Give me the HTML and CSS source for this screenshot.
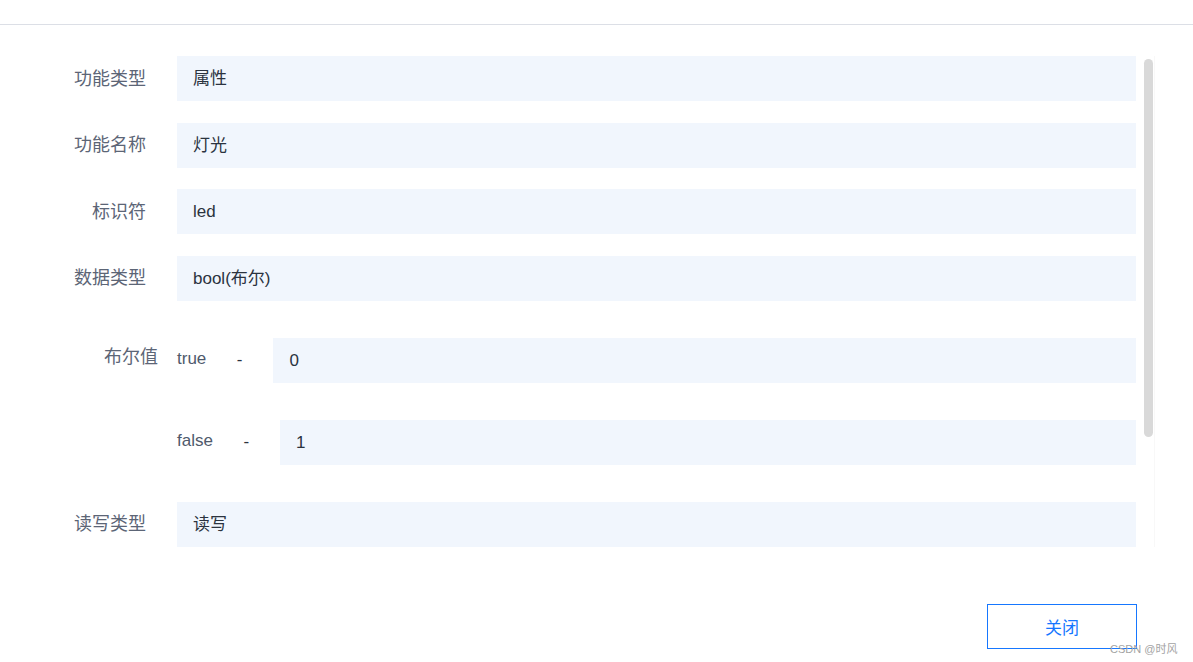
FILE: index.html
```html
<!DOCTYPE html>
<html lang="zh-CN">
<head>
  <meta charset="UTF-8" />
  <title>查看功能</title>
  <link rel="stylesheet" href="styles.css">
</head>
<body>
  <div class="dialog">
    <div class="dialog-header"></div>

    <div class="dialog-body">
      <div class="scroll-area">
        <div class="form-row">
          <div class="form-label">功能类型</div>
          <div class="form-value">属性</div>
        </div>
        <div class="form-row">
          <div class="form-label">功能名称</div>
          <div class="form-value">灯光</div>
        </div>
        <div class="form-row">
          <div class="form-label">标识符</div>
          <div class="form-value">led</div>
        </div>
        <div class="form-row">
          <div class="form-label">数据类型</div>
          <div class="form-value">bool(布尔)</div>
        </div>

        <div class="form-row bool-row">
          <div class="form-label bool-label">布尔值</div>
          <div class="bool-list">
            <div class="bool-item">
              <span class="bool-key">true</span>
              <span class="bool-dash">-</span>
              <div class="form-value">0</div>
            </div>
            <div class="bool-item">
              <span class="bool-key">false</span>
              <span class="bool-dash">-</span>
              <div class="form-value">1</div>
            </div>
          </div>
        </div>

        <div class="form-row">
          <div class="form-label">读写类型</div>
          <div class="form-value">读写</div>
        </div>

        <div class="scrollbar"></div>
      </div>
    </div>

    <div class="dialog-footer">
      <button class="btn-close">关闭</button>
    </div>
  </div>

  <div class="watermark">CSDN @时风</div>
</body>
</html>
```

FILE: styles.css
```css
html, body {
  margin: 0;
  padding: 0;
  height: 100%;
  background: #fff;
  font-family: 'Liberation Sans', 'Noto Sans CJK SC', sans-serif;
}

.dialog {
  position: relative;
  min-height: 100%;
}

.dialog-header {
  height: 24px;
  border-bottom: 1px solid #dcdfe6;
}

.dialog-body {
  padding-top: 31px;
}

.scroll-area {
  position: relative;
  margin-right: 38px;
  padding-right: 18px;
  border-right: 1px solid #f8f8f8;
}

.form-row {
  display: flex;
  align-items: center;
  margin-bottom: 21.67px;
}

.form-label {
  width: 177px;
  box-sizing: border-box;
  padding-right: 31px;
  padding-bottom: 4px;
  text-align: right;
  font-size: 18px;
  color: #5c6576;
  flex-shrink: 0;
}

.form-value {
  flex: 1;
  height: 45px;
  line-height: 45px;
  padding-left: 16px;
  background: #f1f6fd;
  font-size: 17px;
  color: #2b333f;
}

.bool-row {
  align-items: flex-start;
  margin-top: 37px;
  margin-bottom: 37px;
}

.bool-label {
  padding-right: 19px;
  padding-top: 4px;
  padding-bottom: 0;
}

.bool-list {
  flex: 1;
  display: flex;
  flex-direction: column;
  gap: 37px;
}

.bool-item {
  display: flex;
  align-items: center;
}

.bool-key {
  font-size: 17px;
  color: #4f5a6c;
  margin-top: -3px;
}

.bool-dash {
  font-size: 17px;
  color: #2b333f;
  margin: 0 31px 0 30.5px;
}

.scrollbar {
  position: absolute;
  top: 3px;
  right: 1px;
  width: 9px;
  height: 378px;
  border-radius: 5px;
  background: #d9d9d9;
}

.dialog-footer {
  display: flex;
  justify-content: flex-end;
  padding: 35px 56px 0 0;
}

.btn-close {
  width: 150px;
  height: 45px;
  background: #fff;
  border: 1px solid #1677ff;
  color: #1677ff;
  font-size: 17px;
  font-family: 'Liberation Sans', 'Noto Sans CJK SC', sans-serif;
  cursor: pointer;
}

.watermark {
  position: absolute;
  left: 1110px;
  top: 640px;
  font-size: 11px;
  color: #a3a3a3;
}
```
